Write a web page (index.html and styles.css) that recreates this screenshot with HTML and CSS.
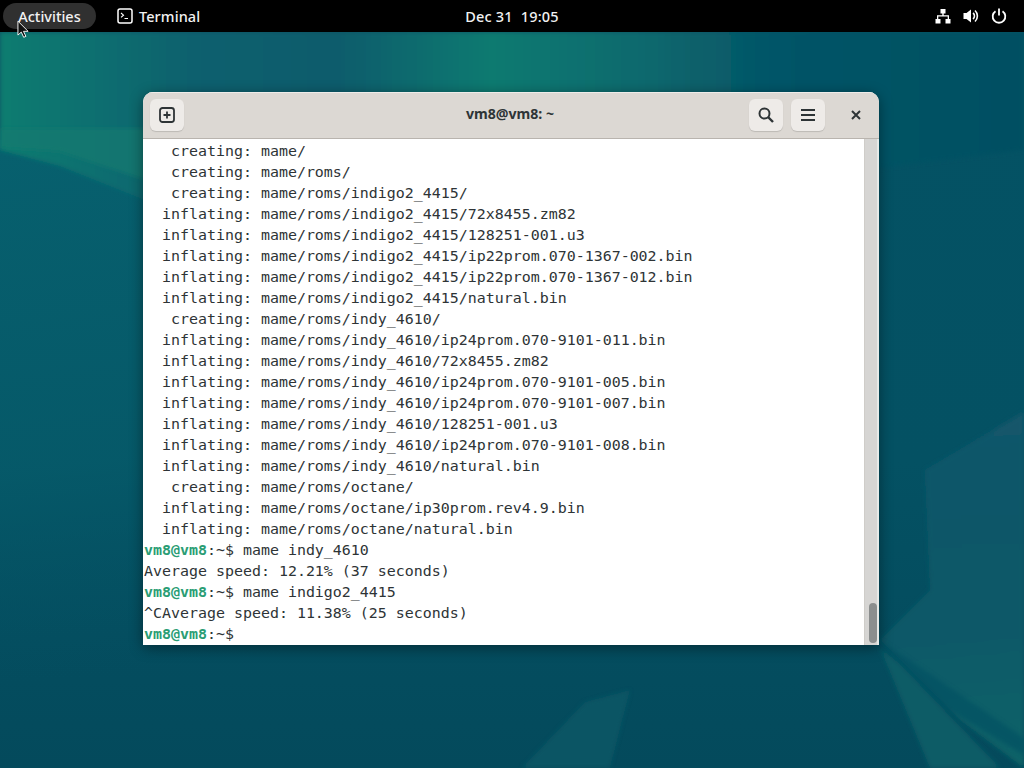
FILE: index.html
```html
<!DOCTYPE html>
<html lang="en">
<head>
<meta charset="utf-8">
<title>Terminal</title>
<link rel="stylesheet" href="styles.css">
</head>
<body>
<div class="desktop">
  <svg class="wallpaper" viewBox="0 0 1024 768" preserveAspectRatio="none" aria-hidden="true">
    <defs>
      <linearGradient id="bg" x1="0" y1="0" x2="0" y2="1">
        <stop offset="0.1" stop-color="#045264"/>
        <stop offset="0.6" stop-color="#045163"/>
        <stop offset="1" stop-color="#044a5c"/>
      </linearGradient>
      <linearGradient id="leftwash" gradientUnits="userSpaceOnUse" x1="0" y1="150" x2="60" y2="680">
        <stop offset="0" stop-color="#07606e"/>
        <stop offset="0.6" stop-color="#065b6a" stop-opacity=".8"/>
        <stop offset="1" stop-color="#045264" stop-opacity="0"/>
      </linearGradient>
      <linearGradient id="topstrip" gradientUnits="userSpaceOnUse" x1="0" y1="0" x2="1024" y2="0">
        <stop offset="0" stop-color="#117c70"/>
        <stop offset="0.2" stop-color="#0b5f6e"/>
        <stop offset="0.33" stop-color="#0b5c6c"/>
        <stop offset="0.48" stop-color="#107a70"/>
        <stop offset="0.62" stop-color="#0a6a6e"/>
        <stop offset="0.76" stop-color="#055467"/>
        <stop offset="1" stop-color="#045062"/>
      </linearGradient>
      <linearGradient id="facet" gradientUnits="userSpaceOnUse" x1="960" y1="430" x2="990" y2="768">
        <stop offset="0" stop-color="#12566a"/>
        <stop offset="0.6" stop-color="#0b5967"/>
        <stop offset="1" stop-color="#0a6367"/>
      </linearGradient>
      <filter id="edge" x="-5%" y="-5%" width="110%" height="110%"><feGaussianBlur stdDeviation="2"/></filter>
    </defs>
    <rect width="1024" height="768" fill="url(#bg)"/>
    <rect x="0" y="140" width="300" height="628" fill="url(#leftwash)"/>
    <polygon points="0,32 1024,32 1024,150 300,240 145,200 60,166 0,150" fill="url(#topstrip)" filter="url(#edge)"/>
    <polygon points="0,128 145,128 145,180 60,152 0,148" fill="#137a70" opacity=".7" filter="url(#edge)"/>
    <polygon points="925,470 1024,412 1024,768 960,720 880,640 930,590" fill="url(#facet)" filter="url(#edge)"/>
    <polygon points="880,640 1024,738 1024,755 925,695" fill="#064f62" opacity=".6" filter="url(#edge)"/>
    <polygon points="880,648 930,768 1000,768 900,664" fill="#0a5c66" filter="url(#edge)"/>
    <polygon points="522,768 585,702 630,690 610,768" fill="#0a5866" opacity=".8" filter="url(#edge)"/>
  </svg>

  <header class="topbar">
    <div class="topbar-left">
      <div class="activities">Activities</div>
      <div class="app-menu">
        <svg class="app-icon" viewBox="0 0 16 16" aria-hidden="true">
          <rect x="1" y="1" width="14" height="14" rx="2" fill="none" stroke="#fff" stroke-width="1.5"/>
          <path d="M4 5l2.5 2.2L4 9.4M7.5 10.5h3.5" fill="none" stroke="#fff" stroke-width="1.1"/>
        </svg>
        <span>Terminal</span>
      </div>
    </div>
    <div class="clock">Dec 31&nbsp; 19:05</div>
    <div class="tray">
      <svg class="tray-icon" viewBox="0 0 16 16" aria-hidden="true">
        <path d="M5.5 1h5v4.500H8.700V7.200H14V11h1.500v4.500h-5V11h2.200V8.600H3.300V11h2.200v4.500h-5V11H2V7.200h5.300V5.500H5.500z" fill="#fff"/>
      </svg>
      <svg class="tray-icon" viewBox="0 0 16 16" aria-hidden="true">
        <path d="M0.500 5h3L8 1.500v13L3.500 11h-3z" fill="#fff"/>
        <path d="M10 5a3.800 3.800 0 0 1 0 6M12 2.500a7.500 7.500 0 0 1 0 11" fill="none" stroke="#fff" stroke-width="1.600"/>
      </svg>
      <svg class="tray-icon" viewBox="0 0 16 16" aria-hidden="true">
        <path d="M4.500 3.200a6.300 6.300 0 1 0 7 0" fill="none" stroke="#fff" stroke-width="1.800"/>
        <path d="M8 0.500v7" fill="none" stroke="#fff" stroke-width="1.800"/>
      </svg>
    </div>
  </header>

  <svg class="cursor" viewBox="0 0 14 20" aria-hidden="true">
    <path d="M1 1v15l3.600-3.200 2.600 5.600 2.400-1-2.600-5.400H12z" fill="#111" stroke="#fff" stroke-width="1"/>
  </svg>

  <section class="window">
    <div class="titlebar">
      <button class="tool-btn new-tab" type="button" aria-label="New tab">
        <svg class="btn-icon" viewBox="0 0 16 16" aria-hidden="true">
          <rect x="1" y="1" width="14" height="14" rx="2.500" fill="none" stroke="#2e3436" stroke-width="1.800"/>
          <path d="M8 4.500v7M4.500 8h7" stroke="#2e3436" stroke-width="1.800"/>
        </svg>
      </button>
      <div class="title">vm8@vm8: ~</div>
      <div class="title-actions">
        <button class="tool-btn" type="button" aria-label="Search">
          <svg class="btn-icon" viewBox="0 0 16 16" aria-hidden="true">
            <circle cx="6.500" cy="6.500" r="5" fill="none" stroke="#2e3436" stroke-width="2"/>
            <path d="M10 10l5 5" stroke="#2e3436" stroke-width="2.400"/>
          </svg>
        </button>
        <button class="tool-btn" type="button" aria-label="Menu">
          <svg class="btn-icon" viewBox="0 0 16 16" aria-hidden="true">
            <path d="M1 3h14M1 8h14M1 13h14" stroke="#2e3436" stroke-width="2"/>
          </svg>
        </button>
        <button class="close-btn" type="button" aria-label="Close">
          <svg class="close-icon" viewBox="0 0 10 10" aria-hidden="true">
            <path d="M1 1l8 8M9 1l-8 8" stroke="#2e3436" stroke-width="2"/>
          </svg>
        </button>
      </div>
    </div>
    <div class="term-body">
      <div class="term">
        <div class="line">   creating: mame/</div>
        <div class="line">   creating: mame/roms/</div>
        <div class="line">   creating: mame/roms/indigo2_4415/</div>
        <div class="line">  inflating: mame/roms/indigo2_4415/72x8455.zm82</div>
        <div class="line">  inflating: mame/roms/indigo2_4415/128251-001.u3</div>
        <div class="line">  inflating: mame/roms/indigo2_4415/ip22prom.070-1367-002.bin</div>
        <div class="line">  inflating: mame/roms/indigo2_4415/ip22prom.070-1367-012.bin</div>
        <div class="line">  inflating: mame/roms/indigo2_4415/natural.bin</div>
        <div class="line">   creating: mame/roms/indy_4610/</div>
        <div class="line">  inflating: mame/roms/indy_4610/ip24prom.070-9101-011.bin</div>
        <div class="line">  inflating: mame/roms/indy_4610/72x8455.zm82</div>
        <div class="line">  inflating: mame/roms/indy_4610/ip24prom.070-9101-005.bin</div>
        <div class="line">  inflating: mame/roms/indy_4610/ip24prom.070-9101-007.bin</div>
        <div class="line">  inflating: mame/roms/indy_4610/128251-001.u3</div>
        <div class="line">  inflating: mame/roms/indy_4610/ip24prom.070-9101-008.bin</div>
        <div class="line">  inflating: mame/roms/indy_4610/natural.bin</div>
        <div class="line">   creating: mame/roms/octane/</div>
        <div class="line">  inflating: mame/roms/octane/ip30prom.rev4.9.bin</div>
        <div class="line">  inflating: mame/roms/octane/natural.bin</div>
        <div class="line"><b class="prompt">vm8@vm8</b><span>:~$ mame indy_4610</span></div>
        <div class="line">Average speed: 12.21% (37 seconds)</div>
        <div class="line"><b class="prompt">vm8@vm8</b><span>:~$ mame indigo2_4415</span></div>
        <div class="line">^CAverage speed: 11.38% (25 seconds)</div>
        <div class="line"><b class="prompt">vm8@vm8</b><span>:~$</span></div>
      </div>
      <div class="scrollbar"><div class="thumb"></div></div>
    </div>
  </section>
</div>
</body>
</html>
```
FILE: styles.css
```css
* { box-sizing: border-box; }
html, body { margin: 0; padding: 0; height: 100%; overflow: hidden; }
.desktop { position: relative; width: 1024px; height: 768px; overflow: hidden; background: #055364; font-family: "Noto Sans", "Liberation Sans", sans-serif; }
.wallpaper { position: absolute; inset: 0; width: 100%; height: 100%; }

.topbar { position: relative; height: 32px; background: #000; color: #f2f2f2; display: flex; align-items: center; justify-content: space-between; font-size: 14.5px; font-weight: 500; }
.topbar-left { display: flex; align-items: center; width: 300px; padding-left: 3px; }
.activities { height: 26px; width: 93px; border-radius: 13px; background: #303030; display: flex; align-items: center; justify-content: center; }
.app-menu { display: flex; align-items: center; gap: 6px; margin-left: 21px; letter-spacing: .08px; }
.app-icon { width: 16px; height: 16px; }
.clock { width: 300px; text-align: center; letter-spacing: .2px; }
.tray { width: 300px; display: flex; justify-content: flex-end; gap: 12px; padding-right: 17px; }
.tray-icon { width: 16px; height: 16px; }
.cursor { position: absolute; left: 17px; top: 20px; width: 13px; height: 19px; }

.window { position: absolute; left: 143px; top: 92px; width: 736px; height: 553px; border-radius: 10px 10px 0 0; overflow: hidden; box-shadow: 0 3px 14px rgba(0,0,0,.42); background: #fff; }
.titlebar { height: 47px; background: #dcd8d3; box-shadow: inset 0 1px 0 #eeece9; border-bottom: 1px solid #b9b4ae; display: flex; align-items: center; justify-content: space-between; position: relative; padding: 0 0 1px 7px; }
.title { position: absolute; left: 0; right: 2px; top: 12px; text-align: center; font-size: 14.1px; font-weight: 700; color: #2e3436; pointer-events: none; }
.title-actions { display: flex; align-items: center; gap: 8px; }
.tool-btn { width: 34px; height: 32px; padding: 0; border: 0; border-radius: 6px; background: #eeebe8; box-shadow: 0 1px 1px rgba(0,0,0,.14); display: flex; align-items: center; justify-content: center; }
.btn-icon { width: 16px; height: 16px; }
.close-btn { width: 24px; height: 24px; margin-left: 11px; margin-right: 11px; padding: 0; border: 0; background: transparent; display: flex; align-items: center; justify-content: center; }
.close-icon { width: 10px; height: 10px; }

.term-body { height: 506px; display: flex; background: #fff; }
.term { flex: 1; padding: 2px 0 0 1px; font-family: "DejaVu Sans Mono", monospace; font-size: 14.95px; line-height: 21px; color: #2e3436; overflow: hidden; }
.line { height: 21px; white-space: pre; }
.prompt { color: #2a9d74; font-weight: 700; }
.scrollbar { width: 15px; background: #d6d5d3; border-left: 1px solid #cfcdc9; border-right: 2px solid #e6e9e7; position: relative; }
.thumb { position: absolute; right: 0; bottom: 2px; width: 8px; height: 40px; border-radius: 4px; background: #8b8e8e; }
```
